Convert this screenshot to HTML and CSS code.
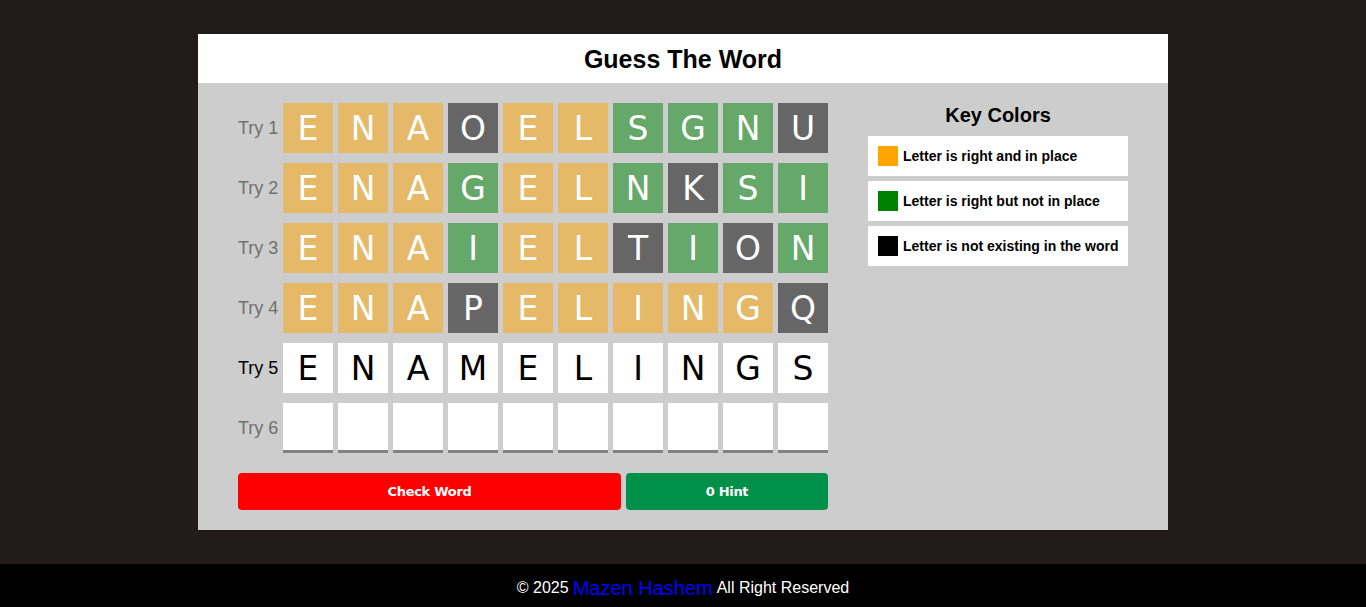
FILE: index.html
```html
<!DOCTYPE html>
<html lang="en">
<head>
<meta charset="utf-8">
<title>Guess The Word</title>
<link rel="stylesheet" href="styles.css">
</head>
<body>
<main class="page">
  <div class="game">
    <h1 class="title">Guess The Word</h1>
    <div class="area">
      <div class="board">
        <div class="row done"><span class="label">Try 1</span>
          <span class="tile y">E</span><span class="tile y">N</span><span class="tile y">A</span><span class="tile d">O</span><span class="tile y">E</span><span class="tile y">L</span><span class="tile g">S</span><span class="tile g">G</span><span class="tile g">N</span><span class="tile d">U</span>
        </div>
        <div class="row done"><span class="label">Try 2</span>
          <span class="tile y">E</span><span class="tile y">N</span><span class="tile y">A</span><span class="tile g">G</span><span class="tile y">E</span><span class="tile y">L</span><span class="tile g">N</span><span class="tile d">K</span><span class="tile g">S</span><span class="tile g">I</span>
        </div>
        <div class="row done"><span class="label">Try 3</span>
          <span class="tile y">E</span><span class="tile y">N</span><span class="tile y">A</span><span class="tile g">I</span><span class="tile y">E</span><span class="tile y">L</span><span class="tile d">T</span><span class="tile g">I</span><span class="tile d">O</span><span class="tile g">N</span>
        </div>
        <div class="row done"><span class="label">Try 4</span>
          <span class="tile y">E</span><span class="tile y">N</span><span class="tile y">A</span><span class="tile d">P</span><span class="tile y">E</span><span class="tile y">L</span><span class="tile y">I</span><span class="tile y">N</span><span class="tile y">G</span><span class="tile d">Q</span>
        </div>
        <div class="row active"><span class="label">Try 5</span>
          <span class="tile w">E</span><span class="tile w">N</span><span class="tile w">A</span><span class="tile w">M</span><span class="tile w">E</span><span class="tile w">L</span><span class="tile w">I</span><span class="tile w">N</span><span class="tile w">G</span><span class="tile w">S</span>
        </div>
        <div class="row empty"><span class="label">Try 6</span>
          <span class="tile e"></span><span class="tile e"></span><span class="tile e"></span><span class="tile e"></span><span class="tile e"></span><span class="tile e"></span><span class="tile e"></span><span class="tile e"></span><span class="tile e"></span><span class="tile e"></span>
        </div>
        <div class="actions">
          <button class="btn check">Check Word</button>
          <button class="btn hint">0 Hint</button>
        </div>
      </div>
      <aside class="key">
        <h2 class="key-title">Key Colors</h2>
        <div class="key-item"><span class="sw orange"></span>Letter is right and in place</div>
        <div class="key-item"><span class="sw green"></span>Letter is right but not in place</div>
        <div class="key-item"><span class="sw black"></span>Letter is not existing in the word</div>
      </aside>
    </div>
  </div>
</main>
<footer class="footer">© 2025 <span class="name">Mazen Hashem</span> All Right Reserved</footer>
</body>
</html>
```
FILE: styles.css
```css
* { box-sizing: border-box; }
html, body { margin: 0; padding: 0; }
body {
  background: #231b1b;
  font-family: "Liberation Sans", Arial, sans-serif;
  min-height: 100vh;
  display: flex;
  flex-direction: column;
}
.page {
  flex: 1;
  padding: 34px 0;
  display: flex;
  justify-content: center;
  align-items: flex-start;
}
.game {
  width: 970px;
  background: #cdcdcd;
}
.title {
  margin: 0;
  background: #fff;
  height: 49px;
  line-height: 51px;
  text-align: center;
  font-size: 25px;
  font-weight: bold;
  color: #000;
}
.area {
  display: flex;
  gap: 40px;
  padding: 20px 40px;
}
.board {
  display: flex;
  flex-direction: column;
  gap: 10px;
  width: 590px;
}
.row {
  display: flex;
  gap: 5px;
  align-items: center;
}
.label {
  width: 40px;
  font-size: 18px;
  color: #707070;
  white-space: nowrap;
}
.active .label { color: #000; }
.tile {
  width: 50px;
  height: 50px;
  display: flex;
  align-items: center;
  justify-content: center;
  font-family: "DejaVu Sans", Verdana, sans-serif;
  font-size: 33px;
  color: #fff;
}
.tile.y { background: #e5b967; }
.tile.g { background: #66a869; }
.tile.d { background: #666666; }
.tile.w { background: #fff; color: #000; }
.tile.e { background: #fff; border-bottom: 3px solid #808080; }
.actions {
  display: flex;
  gap: 5px;
  margin-top: 10px;
}
.btn {
  height: 37px;
  border: none;
  border-radius: 4px;
  color: #fff;
  font-family: "DejaVu Sans", Tahoma, sans-serif;
  font-weight: bold;
  font-size: 13px;
  letter-spacing: -0.3px;
  cursor: pointer;
}
.check { width: 383px; background: #ff0000; }
.hint { width: 202px; background: #00904a; }
.key {
  width: 260px;
  display: flex;
  flex-direction: column;
  gap: 5px;
}
.key-title {
  margin: 0 0 3px;
  text-align: center;
  font-size: 20px;
  font-weight: bold;
  height: 25px;
  line-height: 24px;
  color: #000;
}
.key-item {
  background: #fff;
  height: 40px;
  display: flex;
  align-items: center;
  padding-left: 10px;
  gap: 5px;
  font-size: 14px;
  font-weight: bold;
  color: #000;
}
.sw { width: 20px; height: 20px; flex: none; }
.sw.orange { background: #ffa500; }
.sw.green { background: #008000; }
.sw.black { background: #000; }
.footer {
  background: #000;
  height: 43px;
  display: flex;
  align-items: center;
  justify-content: center;
  gap: 4px;
  color: #fff;
  font-size: 16px;
  padding-top: 5px;
}
.name { color: #0000ff; font-size: 20px; }
```
